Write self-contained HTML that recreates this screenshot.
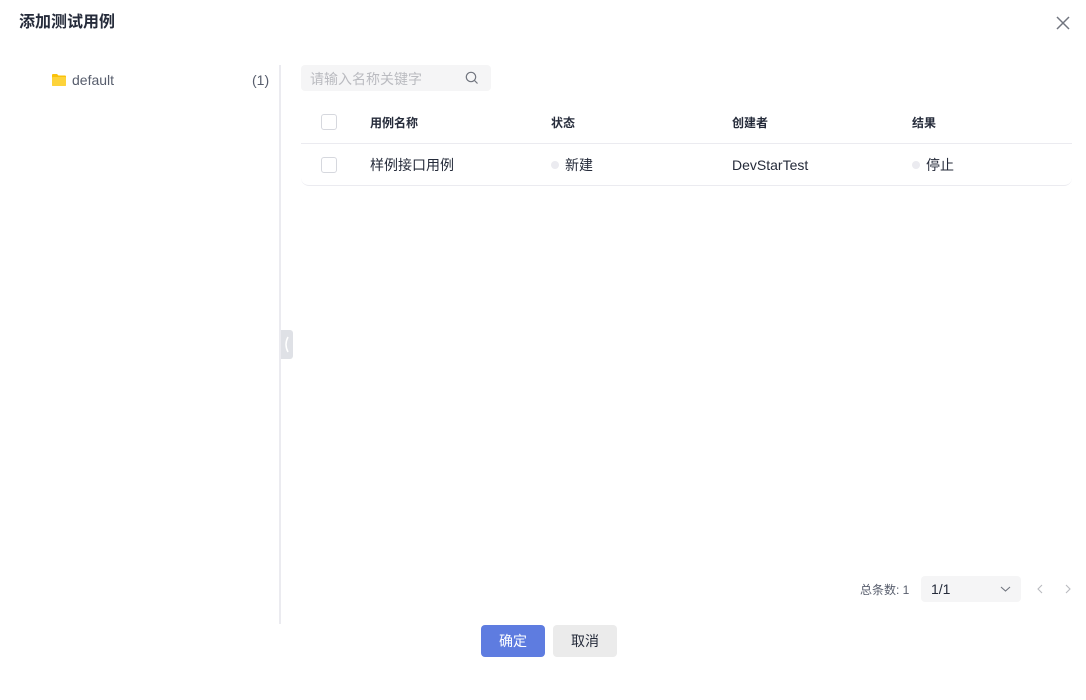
<!DOCTYPE html>
<html><head><meta charset="utf-8"><style>
*{margin:0;padding:0;box-sizing:border-box}
body{width:1086px;height:700px;background:#fff;font-family:"Liberation Sans","Noto Sans CJK SC",sans-serif;color:#252b3a;position:relative;overflow:hidden;font-size:14px}
.a{position:absolute}
.cb{position:absolute;width:16px;height:16px;border:1px solid #d6d8de;border-radius:3px;background:#fff}
.dot{display:inline-block;width:8px;height:8px;border-radius:50%;background:#ebebf0;margin-right:6px;vertical-align:1px}
.r{top:155px;line-height:20px}
</style></head><body>
<div class="a" style="left:19px;top:8px;font-size:16px;font-weight:bold;color:#252b3a">添加测试用例</div>
<svg class="a" style="left:1056px;top:16px" width="14" height="14"><path d="M1 1L13 13M13 1L1 13" stroke="#71757f" stroke-width="1.5"/></svg>
<svg class="a" style="left:52px;top:73px" width="14" height="13"><path d="M0 2Q0 1 1 1H5L6.5 2.5H13Q14 2.5 14 3.5V12Q14 13 13 13H1Q0 13 0 12Z" fill="#fac20a"/><rect x="0" y="4" width="14" height="9" rx="1" fill="#fdd33a"/></svg>
<div class="a" style="left:72px;top:72px;color:#575d6c">default</div>
<div class="a" style="left:252px;top:72px;color:#575d6c">(1)</div>
<div class="a" style="left:279px;top:65px;width:2px;height:559px;background:#ebebf0"></div>
<div class="a" style="left:281px;top:330px;width:12px;height:29px;background:#dfe1e6;border-radius:0 3px 3px 0"></div>
<svg class="a" style="left:283px;top:335px" width="8" height="19"><path d="M5 2Q1 9.5 5 17" stroke="#fff" stroke-width="1.5" fill="none"/></svg>
<div class="a" style="left:301px;top:65px;width:190px;height:26px;background:#f5f5f6;border-radius:4px"></div>
<div class="a" style="left:310px;top:69px;color:#babbc0">请输入名称关键字</div>
<svg class="a" style="left:465px;top:71px" width="14" height="14"><circle cx="6" cy="6" r="4.7" stroke="#71757f" stroke-width="1.2" fill="none"/><path d="M9.5 9.5L12.5 12.5" stroke="#71757f" stroke-width="1.2"/></svg>
<div class="cb" style="left:321px;top:114px"></div>
<div class="a" style="left:370px;top:114px;font-size:12px;font-weight:bold">用例名称</div>
<div class="a" style="left:551px;top:114px;font-size:12px;font-weight:bold">状态</div>
<div class="a" style="left:732px;top:114px;font-size:12px;font-weight:bold">创建者</div>
<div class="a" style="left:912px;top:114px;font-size:12px;font-weight:bold">结果</div>
<div class="a" style="left:301px;top:143px;width:771px;height:1px;background:#ebebf0"></div>
<div class="a" style="left:301px;top:144px;width:771px;height:42px;border-bottom:1px solid #ebebf0;border-radius:0 0 8px 8px"></div>
<div class="cb" style="left:321px;top:157px"></div>
<div class="a r" style="left:370px;color:#252b3a">样例接口用例</div>
<div class="a r" style="left:551px"><span class="dot"></span>新建</div>
<div class="a r" style="left:732px">DevStarTest</div>
<div class="a r" style="left:912px"><span class="dot"></span>停止</div>
<div class="a" style="left:860px;top:581px;font-size:12px;color:#575d6c">总条数: 1</div>
<div class="a" style="left:921px;top:576px;width:100px;height:26px;background:#f5f5f6;border-radius:4px"></div>
<div class="a" style="left:931px;top:581px">1/1</div>
<svg class="a" style="left:1000px;top:585px" width="11" height="8"><path d="M1 2L5.5 6L10 2" stroke="#71757f" stroke-width="1.1" fill="none"/></svg>
<svg class="a" style="left:1036px;top:584px" width="8" height="10"><path d="M6 1L2 5L6 9" stroke="#babbc0" stroke-width="1.1" fill="none"/></svg>
<svg class="a" style="left:1064px;top:584px" width="8" height="10"><path d="M2 1L6 5L2 9" stroke="#babbc0" stroke-width="1.1" fill="none"/></svg>
<div class="a" style="left:481px;top:625px;width:64px;height:32px;background:#5e7ce0;border-radius:4px;color:#fff;text-align:center;line-height:32px">确定</div>
<div class="a" style="left:553px;top:625px;width:64px;height:32px;background:#ebebeb;border-radius:4px;color:#252b3a;text-align:center;line-height:32px">取消</div>
</body></html>
